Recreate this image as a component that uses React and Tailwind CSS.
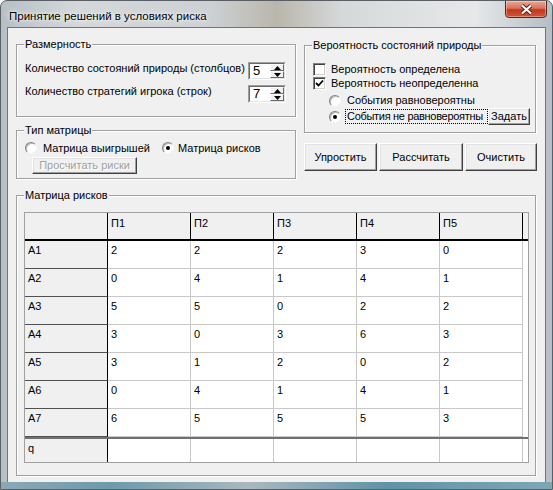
// App.jsx — "Принятие решений в условиях риска" window
import React from "react";

const rows = [
	["A1", 2, 2, 2, 3, 0],
	["A2", 0, 4, 1, 4, 1],
	["A3", 5, 5, 0, 2, 2],
	["A4", 3, 0, 3, 6, 3],
	["A5", 3, 1, 2, 0, 2],
	["A6", 0, 4, 1, 4, 1],
	["A7", 6, 5, 5, 5, 3],
];

const cols = ["П1", "П2", "П3", "П4", "П5"];

const Group = ({ title, className = "", children }) => (
	<fieldset
		className={`border border-[#a0a0a0] shadow-[inset_1px_1px_0_#fff,1px_1px_0_#fff] ${className}`}
	>
		<legend className="ml-[7px] px-[1px] leading-[14px] bg-[#f0f0f0]">{title}</legend>
		{children}
	</fieldset>
);

const Button = ({ children, className = "", disabled }) => (
	<div
		className={`flex items-center justify-center bg-[#f0f0f0] border border-t-white border-l-white border-b-[#404040] border-r-[#404040] shadow-[inset_-1px_-1px_0_#a0a0a0,inset_1px_1px_0_#e3e3e3] ${
			disabled ? "text-[#a0a0a0] [text-shadow:1px_1px_0_#fff]" : ""
		} ${className}`}
	>
		{children}
	</div>
);

const SpinBtn = ({ up }) => (
	<div className="flex-1 flex items-center justify-center bg-[#f0f0f0] border border-t-white border-l-white border-b-[#696969] border-r-[#696969]">
		<svg width="7" height="4" viewBox="0 0 7 4">
			{up ? <polygon points="0,4 7,4 3.5,0" fill="#000" /> : <polygon points="0,0 7,0 3.5,4" fill="#000" />}
		</svg>
	</div>
);

const Spin = ({ value }) => (
	<div className="w-[38px] h-[18px] flex border border-t-[#a0a0a0] border-l-[#a0a0a0] border-b-white border-r-white">
		<div className="flex-1 flex bg-white border border-t-[#696969] border-l-[#696969] border-b-[#e3e3e3] border-r-[#e3e3e3]">
			<span className="flex-1 pl-[3px] text-[13px] leading-[14px]">{value}</span>
			<div className="w-[14px] flex flex-col">
				<SpinBtn up />
				<SpinBtn />
			</div>
		</div>
	</div>
);

const Check = ({ checked }) => (
	<div className="w-[13px] h-[13px] flex items-center justify-center bg-white border border-t-[#808080] border-l-[#808080] border-b-white border-r-white shadow-[inset_1px_1px_0_#404040,inset_-1px_-1px_0_#d4d0c8]">
		{checked && (
			<svg width="9" height="9" viewBox="0 0 9 9">
				<path d="M1 4 L3.5 6.5 L8 1.5" stroke="#000" strokeWidth="1.8" fill="none" />
			</svg>
		)}
	</div>
);

const Radio = ({ checked }) => (
	<div className="w-[12px] h-[12px] rounded-full flex items-center justify-center bg-white border border-t-[#808080] border-l-[#808080] border-b-[#f4f4f4] border-r-[#f4f4f4] shadow-[inset_1px_1px_0_#b8b8b8]">
		{checked && <div className="w-[4px] h-[4px] rounded-full bg-black" />}
	</div>
);

export default function App() {
	return (
		<div className="w-[553px] h-[490px] flex flex-col overflow-hidden rounded-t-[7px] border border-[#5a5f66] bg-[linear-gradient(90deg,#b7bfc5_0%,#d4d8db_14%,#cdd1d4_38%,#b9b6ac_50%,#d6d9da_62%,#e6e8e9_86%,#b4bec5_100%)] font-['Liberation_Sans',Arial,sans-serif] text-[11px] text-black">
			{/* title bar */}
			<div className="h-[27px] flex items-start relative">
				<span className="pl-[8px] pt-[7px] text-[11.5px] leading-[16px] [text-shadow:0_0_6px_#fff,0_0_3px_#fff]">
					Принятие решений в условиях риска
				</span>
				<div className="absolute top-[-1px] right-[5px] w-[42px] h-[18px] rounded-b-[4px] border border-[#5e2418] bg-[linear-gradient(180deg,#e9a996_0%,#d8735d_45%,#c0391f_55%,#d2553a_100%)] flex items-center justify-center shadow-[inset_0_0_0_1px_rgba(255,255,255,0.35)]">
					<svg width="13" height="11" viewBox="0 0 13 11">
						<path d="M2 1.5 L11 9.5 M11 1.5 L2 9.5" stroke="#5a1a10" strokeWidth="4" />
						<path d="M2 1.5 L11 9.5 M11 1.5 L2 9.5" stroke="#fff" strokeWidth="2.2" />
					</svg>
				</div>
			</div>

			{/* client area */}
			<div className="mx-[7px] w-[537px] h-[454px] flex flex-col px-[8px] bg-[#f0f0f0] shadow-[0_0_0_1px_#6e757c]">
				<div className="h-[160px] flex gap-[8px] pt-[9px] items-start">
					{/* left column */}
					<div className="w-[280px] flex flex-col">
						<Group title="Размерность" className="h-[80px]">
							<div className="pl-[8px] pt-[11px] flex flex-col gap-[5px]">
								<div className="flex items-start h-[18px]">
									<span className="w-[223px] leading-[14px] mt-[-1px] whitespace-nowrap">
										Количество состояний природы (столбцов)
									</span>
									<Spin value="5" />
								</div>
								<div className="flex items-start h-[18px]">
									<span className="w-[223px] leading-[14px] mt-[-1px] whitespace-nowrap">
										Количество стратегий игрока (строк)
									</span>
									<Spin value="7" />
								</div>
							</div>
						</Group>
						<Group title="Тип матрицы" className="h-[56px] mt-[6px]">
							<div className="pl-[8px] pt-[4px] flex flex-col">
								<div className="h-[14px] flex items-center">
									<div className="w-[137px] flex items-center gap-[6px]">
										<Radio />
										<span>Матрица выигрышей</span>
									</div>
									<div className="flex items-center gap-[4px]">
										<Radio checked />
										<span>Матрица рисков</span>
									</div>
								</div>
								<Button disabled className="mt-[2px] ml-[7px] w-[105px] h-[17px]">
									Просчитать риски
								</Button>
							</div>
						</Group>
					</div>

					{/* right column */}
					<div className="w-[233px] flex flex-col mt-[1px]">
						<Group title="Вероятность состояний природы" className="w-[232px] h-[95px]">
							<div className="pt-[10px] flex flex-col">
								<div className="h-[14px] pl-[8px] flex items-center gap-[5px]">
									<Check />
									<span>Вероятность определена</span>
								</div>
								<div className="h-[15px] pl-[8px] flex items-center gap-[5px]">
									<Check checked />
									<span>Вероятность неопределенна</span>
								</div>
								<div className="h-[15px] mt-[2px] pl-[24px] flex items-center gap-[6px]">
									<Radio />
									<span>События равновероятны</span>
								</div>
								<div className="h-[17px] pl-[24px] flex items-center">
									<Radio checked />
									<span className="ml-[4px] w-[143px] h-[15px] leading-[13px] border border-dotted border-black overflow-hidden whitespace-nowrap pl-[1px] tracking-[-0.3px]">
										События не равновероятны
									</span>
									<Button className="w-[42px] h-[17px]">Задать</Button>
								</div>
							</div>
						</Group>
						<div className="mt-[10px] h-[28px] flex gap-[2px]">
							<Button className="w-[73px] h-[28px]">Упростить</Button>
							<Button className="w-[84px] h-[28px]">Рассчитать</Button>
							<Button className="w-[72px] h-[28px]">Очистить</Button>
						</div>
					</div>
				</div>

				{/* matrix group */}
				<Group title="Матрица рисков" className="w-[520px] h-[288px]">
					<div className="pl-[7px] pt-[10px]">
						<div className="w-[505px] h-[251px] border border-[#a0a0a0] bg-white overflow-hidden flex flex-col">
							{/* header row */}
							<div className="flex h-[28px] border-b-2 border-black bg-[#f0f0f0] shrink-0">
								<div className="w-[83px] border-r border-black" />
								{cols.map((c) => (
									<div key={c} className="w-[83px] border-r border-black pl-[3px] pt-[4px] leading-[12px]">
										{c}
									</div>
								))}
							</div>
							{rows.map((r) => (
								<div key={r[0]} className="flex h-[28px] shrink-0">
									<div className="w-[83px] bg-[#f0f0f0] border-r border-b border-r-black border-b-[#505050] pl-[3px] pt-[3px] leading-[12px]">
										{r[0]}
									</div>
									{r.slice(1).map((v, i) => (
										<div key={i} className="w-[83px] border-r border-b border-[#c8c8c8] pl-[3px] pt-[3px] leading-[12px]">
											{v}
										</div>
									))}
								</div>
							))}
							<div className="h-[2px] bg-[#707070] shrink-0" />
							<div className="flex h-[28px] shrink-0">
								<div className="w-[83px] bg-[#f0f0f0] border-r border-black pl-[3px] pt-[3px] leading-[12px]">
									q
								</div>
								{cols.map((c) => (
									<div key={c} className="w-[83px] border-r border-[#c8c8c8]" />
								))}
							</div>
						</div>
					</div>
				</Group>
			</div>
			<div className="flex-1 bg-[linear-gradient(90deg,#8aa9b5_0%,#6d9aab_20%,#a9b8bf_45%,#5f93a6_70%,#7ea7b6_100%)]" />
		</div>
	);
}
